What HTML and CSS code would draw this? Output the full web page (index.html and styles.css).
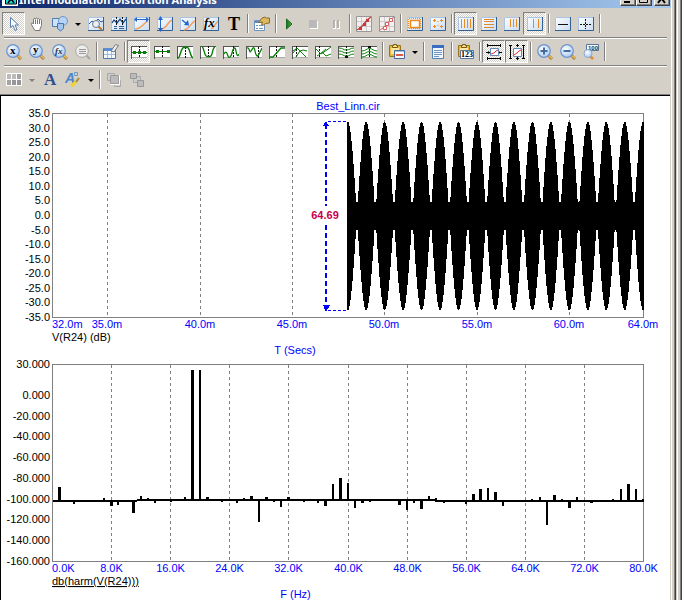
FILE: index.html
```html
<!DOCTYPE html>
<html lang="en">
<head>
<meta charset="utf-8">
<title>Intermodulation Distortion Analysis</title>
<link rel="stylesheet" href="styles.css">
</head>
<body>
<svg class="sprite" aria-hidden="true">
  <defs>
    <linearGradient id="tile" x1="0" y1="0" x2="1" y2="1"><stop offset="0" stop-color="#fff"/><stop offset="1" stop-color="#c9dcf2"/></linearGradient>
    <radialGradient id="lens" cx=".4" cy=".35" r=".7"><stop offset="0" stop-color="#fff"/><stop offset="1" stop-color="#a4c8f4"/></radialGradient>
    <linearGradient id="leaf" x1="0" y1="0" x2="1" y2="0"><stop offset="0" stop-color="#1c6e1c"/><stop offset="1" stop-color="#4eb04e"/></linearGradient>

    <symbol id="frame" viewBox="0 0 16 16"><path fill="url(#tile)" d="M0 1h15v14H0z"/><path fill="none" stroke="#a9c4e4" d="M.5 14V1.5H15"/><path fill="none" stroke="#34608f" d="M0 14.5h15.5V1"/></symbol>
    <symbol id="magnifier" viewBox="0 0 16 16"><path stroke="#a87830" stroke-width="3" d="M11 11l4 4"/><path stroke="#ecc050" stroke-width="1.500" d="M11 11l4 3.500"/><circle cx="7" cy="7" r="6.300" fill="url(#lens)" stroke="#6f92cc" stroke-width="1.200"/></symbol>
    <symbol id="axes" viewBox="0 0 16 16"><path fill="#fff" d="M0 2h16v12H0z"/><path stroke="#555" fill="none" d="M.5 2v13M0 2.500h16"/><path stroke="#aaa" d="M1 13.500h15"/></symbol>
    <symbol id="clipboard" viewBox="0 0 16 16"><path fill="#e8b83c" stroke="#9a7420" d="M.5 1.500h11v11H.5z"/><path fill="#fbe7a0" d="M2 4h8v6H2z"/><path fill="#f8e07c" stroke="#71591c" d="M3.500 3.500v-2h1v-1h3v1h1v2z"/></symbol>

    <symbol id="i-select" viewBox="0 0 16 16"><path fill="#f4f9ff" stroke="#5a7fae" d="M4.500 1.500v10l2.500-2 2 5 2-1-2-4.500h3.500z"/></symbol>
    <symbol id="i-hand" viewBox="0 0 16 16"><path fill="#fff" stroke="#777" d="M5 13L2.500 8.500c-1-1.500 1-2 2-.5V3.500c0-1.500 1.800-1.500 1.800 0 0-2 2.200-2 2.200 0 0-1.500 2-1.500 2 .500 0-1 2-1 2 .5v5L11 13v1.500H6z"/><path stroke="#777" d="M6.500 4v4M8.500 4v4M10.500 4v4"/></symbol>
    <symbol id="i-shapes" viewBox="0 0 16 16"><path fill="#cfe2f8" stroke="#4e7db4" d="M.5 2.500h9v8h-9z"/><circle cx="11" cy="5" r="4.500" fill="#b7d4f4" stroke="#6a94c6"/><path fill="#a3c6ee" stroke="#4878b0" d="M5.500 7.500h6v5l-3 2.500-3-2.500z"/></symbol>
    <symbol id="i-zoomwave" viewBox="0 0 16 16"><use href="#frame"/><path stroke="#2659b0" fill="none" d="M1 8l3-3 3 2 3-4 3 3 2-1"/><path stroke="#b8762a" stroke-width="2" d="M10 10l4 4"/><circle cx="8" cy="8" r="3.500" fill="#e6effa" stroke="#777"/></symbol>
    <symbol id="i-data" viewBox="0 0 16 16"><use href="#frame"/><path stroke="#134b8a" fill="none" stroke-width="1.300" d="M1 7l2-3 3 3 3-4 3 4 3-4"/><path stroke="#111" stroke-dasharray="2 1" d="M5.500 1v8M11.500 1v8"/><path stroke="#345f93" d="M3 10.500h3M8 10.500h5M3 12.500h3M8 12.500h5"/></symbol>
    <symbol id="i-scalex" viewBox="0 0 16 16"><use href="#frame"/><path stroke="#f0a060" stroke-width="1.500" fill="none" d="M1 13c7 0 8-6 13-8"/><path stroke="#2466cc" d="M1 3.500h13"/><path fill="#2466cc" d="M0 3.500L3 1v5zM15 3.500L12 1v5z"/></symbol>
    <symbol id="i-scaley" viewBox="0 0 16 16"><use href="#frame"/><path stroke="#f0a060" stroke-width="1.500" fill="none" d="M4 13c6 0 6-7 11-9"/><path stroke="#2466cc" d="M3.500 2v12"/><path fill="#2466cc" d="M3.500 0L1 4h5zM3.500 16L1 12h5z"/></symbol>
    <symbol id="i-scalexy" viewBox="0 0 16 16"><use href="#frame"/><path stroke="#f0a060" stroke-width="1.500" fill="none" d="M4 14c6-1 6-7 11-9"/><path stroke="#2466cc" stroke-width="1.500" d="M2 4l5 4"/><path fill="#2466cc" d="M9 9.500L4 9l4-5z"/></symbol>
    <symbol id="i-fx" viewBox="0 0 16 16"><use href="#frame"/><path stroke="#f0a060" stroke-width="1.500" fill="none" d="M8 13c4-1 4-6 7-8"/><text class="glyph-fx" x="1" y="11">fx</text></symbol>
    <symbol id="i-text" viewBox="0 0 16 16"><text class="glyph-t" x="2" y="14">T</text></symbol>
    <symbol id="i-props" viewBox="0 0 16 16"><path fill="#fff" stroke="#6f93bf" d="M.5 4.500h10v10H.5z"/><path fill="#5b8cc8" d="M1 5h9v2H1z"/><path stroke="#6f93bf" d="M2 9.500h2M5 9.500h4M2 12.500h2M5 12.500h4"/><path fill="#dcb95c" stroke="#8a6c2c" d="M4.500 6.500l3-4 3-1.500 2 1h3v5l-4 .5-2 1.500-2-.5 1-2.500z"/></symbol>
    <symbol id="i-play" viewBox="0 0 16 16"><path fill="url(#leaf)" stroke="#1a6a1c" d="M4.500 3v10l5.500-5z"/></symbol>
    <symbol id="i-stop" viewBox="0 0 16 16"><path fill="#fff" d="M5 5h8v8H5z"/><path fill="#b9b9b9" d="M4 4h8v8H4z"/></symbol>
    <symbol id="i-pause" viewBox="0 0 16 16"><path fill="#fff" d="M5 5h3v8H5zM9 5h3v8H9z"/><path fill="#b2b2b2" d="M5 4h2v8H5zM9 4h2v8H9z"/></symbol>
    <symbol id="i-datapts" viewBox="0 0 16 16"><path fill="#f5f0ee" stroke="#999" d="M.5 .5h15v15H.5z"/><path stroke="#ccc" d="M5.500 1v14M10.500 1v14M1 5.500h14M1 10.500h14"/><path stroke="#c83838" stroke-width="1.300" fill="none" d="M1 14l3-2 4-4 3-4 4-3"/><path fill="#c83838" d="M3 11h3v3H3zM7 7h3v3H7zM10 3h3v3h-3z"/></symbol>
    <symbol id="i-tokens" viewBox="0 0 16 16"><path fill="#f5f0ee" stroke="#999" d="M.5 .5h15v15H.5z"/><path stroke="#ccc" d="M5.500 1v14M10.500 1v14M1 5.500h14M1 10.500h14"/><path stroke="#d86060" fill="none" d="M1 14l3-2 4-4 3-4 4-3"/><path fill="#fff" stroke="#d86060" d="M4.500 10.500h3v3h-3zM6.500 6.500h3v3h-3zM10.500 2.500h3v3h-3z"/></symbol>
    <symbol id="i-ruler" viewBox="0 0 16 16"><use href="#frame"/><path fill="#fff" stroke="#ef8a1c" stroke-width="1.500" d="M3.500 4.500h9v7h-9z"/><path fill="none" stroke="#ef8a1c" stroke-dasharray="1 1" d="M2 2.500h12M2 12.500h12M1.500 3v10M13.500 3v10"/></symbol>
    <symbol id="i-plus" viewBox="0 0 16 16"><use href="#frame"/><path stroke="#ef8a1c" d="M4.500 3v3M3 4.500h3M11.500 3v3M10 4.500h3M4.500 9v3M3 10.500h3M11.500 9v3M10 10.500h3M8 5v1M8 9v1"/></symbol>
    <symbol id="i-vmajor" viewBox="0 0 16 16"><use href="#frame"/><path stroke="#e58b25" d="M3.500 3v9M6.500 3v9M9.500 3v9M12.500 3v9"/></symbol>
    <symbol id="i-hmajor" viewBox="0 0 16 16"><use href="#frame"/><path stroke="#e58b25" d="M3 3.500h10M3 5.500h10M3 8.500h10M3 11.500h10"/></symbol>
    <symbol id="i-vright" viewBox="0 0 16 16"><use href="#frame"/><path stroke="#e58b25" d="M6.500 3v8M9.500 3v8M12.500 3v8"/></symbol>
    <symbol id="i-vtwo" viewBox="0 0 16 16"><use href="#frame"/><path stroke="#e58b25" d="M6.500 3v9M11.500 3v9"/></symbol>
    <symbol id="i-baseline" viewBox="0 0 16 16"><use href="#frame"/><path stroke="#111" d="M3 8.500h10"/></symbol>
    <symbol id="i-cross" viewBox="0 0 16 16"><use href="#frame"/><path stroke="#111" stroke-dasharray="2 1" d="M2 8.500h12M7.500 3v10"/></symbol>

    <symbol id="i-zx" viewBox="0 0 16 16"><use href="#magnifier"/><text class="glyph-axis" x="4" y="10">x</text></symbol>
    <symbol id="i-zy" viewBox="0 0 16 16"><use href="#magnifier"/><text class="glyph-axis" x="4" y="9">y</text></symbol>
    <symbol id="i-zfx" viewBox="0 0 16 16"><use href="#magnifier"/><text class="glyph-lens" x="3" y="10">fx</text></symbol>
    <symbol id="i-zlist" viewBox="0 0 16 16"><path stroke="#a5a5a5" stroke-width="2" d="M11 11l4 4"/><circle cx="7" cy="7" r="6.300" fill="#eee" stroke="#a5a5a5"/><path stroke="#999" d="M4 5.500h7M4 7.500h7M4 9.500h7"/></symbol>
    <symbol id="i-table" viewBox="0 0 16 16"><path fill="#f5faff" stroke="#4b79b0" d="M.5 4.500h12v10H.5z"/><path fill="#5b8fd0" d="M1 4h11v3H1z"/><path stroke="#9fbbe0" d="M4.500 7v7M8.500 7v7M1 10.500h11"/><path fill="#eee" stroke="#6f7887" d="M8 7l4.500-6.500 3 1L11 8z"/></symbol>
    <symbol id="i-w1" viewBox="0 0 16 16"><use href="#axes"/><path stroke="#111" stroke-dasharray="2 1" d="M8.500 2v12"/><path stroke="#087c08" d="M0 8.500h16"/><path fill="#087c08" d="M2 7h3v3H2zM7 7h3v3H7zM12 7h3v3h-3z"/></symbol>
    <symbol id="i-w2" viewBox="0 0 16 16"><use href="#axes"/><path stroke="#111" stroke-dasharray="2 1" d="M8.500 2v12"/><path stroke="#087c08" d="M0 7.500h16"/><path fill="#087c08" d="M2 6h3v3H2zM13 6h3v3h-3z"/></symbol>
    <symbol id="i-w3" viewBox="0 0 16 16"><use href="#axes"/><path stroke="#111" stroke-dasharray="2 1" d="M8.500 3v11"/><path stroke="#087c08" fill="none" stroke-width="1.400" d="M1 14c2 0 3-10 5.500-10.500h4C13 4 13 13 16 14"/></symbol>
    <symbol id="i-w4" viewBox="0 0 16 16"><use href="#axes"/><path stroke="#111" stroke-dasharray="2 1" d="M8.500 2v11"/><path stroke="#087c08" fill="none" stroke-width="1.400" d="M2 3c2 0 2 9 5 9.500h3c3 0 2-9 5-9.500"/></symbol>
    <symbol id="i-w5" viewBox="0 0 16 16"><use href="#axes"/><path stroke="#111" stroke-dasharray="2 1" d="M10.500 2v12"/><path stroke="#087c08" fill="none" stroke-width="1.300" d="M1 10c2-4 3-1 4 2s3 1 4-3 3-8 4-2 2 5 3 3"/></symbol>
    <symbol id="i-w6" viewBox="0 0 16 16"><use href="#axes"/><path stroke="#111" stroke-dasharray="2 1" d="M12.500 3v11"/><path stroke="#087c08" fill="none" stroke-width="1.300" d="M1 4c3-1 2 6 4 3s3-6 4 0 3 6 4 3l3-6"/></symbol>
    <symbol id="i-w7" viewBox="0 0 16 16"><use href="#axes"/><path stroke="#111" stroke-dasharray="2 1" d="M7.500 2v12"/><path stroke="#087c08" fill="none" stroke-width="1.300" d="M1 13h3l8-9h4"/></symbol>
    <symbol id="i-w8" viewBox="0 0 16 16"><use href="#axes"/><path stroke="#111" stroke-dasharray="2 1" d="M4.500 2v12"/><path stroke="#087c08" fill="none" d="M1 9l4-5 9 9M4 13l4-6 3-1 4 1M1 7l4-3"/></symbol>
    <symbol id="i-w9" viewBox="0 0 16 16"><use href="#axes"/><path stroke="#111" stroke-dasharray="2 1" d="M4.500 2v12"/><path stroke="#087c08" fill="none" d="M1 5l5 5 3-2 7-5M2 12l3-2 6-5M7 8l4 4 5-2"/></symbol>
    <symbol id="i-w10" viewBox="0 0 16 16"><use href="#axes"/><path stroke="#111" stroke-dasharray="2 1" d="M8.500 2v12"/><path stroke="#087c08" fill="none" d="M1 4c4 0 4 2 7.500 2S12 4 16 4M1 7c4 0 4 2 7.500 2S12 7 16 7M1 10c4 0 4 2 7.500 2S12 10 16 10"/><path fill="#111" d="M7 12h3v2H7z"/></symbol>
    <symbol id="i-w11" viewBox="0 0 16 16"><use href="#axes"/><path stroke="#111" stroke-dasharray="2 1" d="M8.500 2v12"/><path stroke="#087c08" fill="none" d="M1 7c4 0 4-2.500 7.500-2.500S12 7 16 7M1 10c4 0 4-2.500 7.500-2.500S12 10 16 10M1 13c4 0 4-2.500 7.500-2.500S12 13 16 13"/><path fill="#111" d="M7 2h3v2H7z"/></symbol>
    <symbol id="i-paste" viewBox="0 0 16 16"><use href="#clipboard"/><path fill="#f4f8ff" stroke="#44699c" d="M5.500 6.500h10v8h-10z"/><path fill="#a8c3e8" d="M6 7h9v1H6z"/><path stroke="#d93420" fill="none" d="M7 10l1 2 1-2 1 2 1-2 1 2 1-2 1 2"/></symbol>
    <symbol id="i-page" viewBox="0 0 16 16"><path fill="#f1f6fd" stroke="#5580b6" d="M2.500 1.500h11v13h-11z"/><path fill="#3a6cc4" d="M2 1h12v3H2z"/><path stroke="#7494c2" d="M4 6.500h8M4 8.500h8M4 10.500h8M4 12.500h5"/></symbol>
    <symbol id="i-paste123" viewBox="0 0 16 16"><use href="#clipboard"/><path fill="#fff" stroke="#5876a0" d="M2.500 6.500h13v8h-13z"/><text class="glyph-num" x="3" y="13">123</text></symbol>
    <symbol id="i-samex" viewBox="0 0 16 16"><path fill="#fff" stroke="#6686b8" d="M4.500 4.500h8v7h-8z"/><path stroke="#e03030" fill="none" d="M5 10l3-1 2-2 2-1"/><path stroke="#000" d="M1 1.500h14M1 14.500h14M0 8.500h4M13 8.500h3"/><path fill="#000" d="M1 0h1v3H1zM14 0h1v3h-1zM1 13h1v3H1zM14 13h1v3h-1zM2 7l2 1.500-2 1.500zM14 7l-1 1.500 1 1.500z"/></symbol>
    <symbol id="i-samey" viewBox="0 0 16 16"><path fill="#fff" stroke="#6686b8" d="M4.500 4.500h8v8h-8z"/><path stroke="#e03030" fill="none" d="M5 11l3-2 2-2 2-1"/><path stroke="#000" d="M1.500 1v14M14.500 1v14M8.500 0v3M8.500 13v3"/><path fill="#000" d="M0 1h3v1H0zM0 14h3v1H0zM13 1h3v1h-3zM13 14h3v1h-3zM7 1h3v1H7zM7 14h3v1H7z"/></symbol>
    <symbol id="i-zin" viewBox="0 0 16 16"><use href="#magnifier"/><path stroke="#426c9e" stroke-width="2" d="M3.500 7h7M7 3.500v7"/></symbol>
    <symbol id="i-zout" viewBox="0 0 16 16"><use href="#magnifier"/><path stroke="#426c9e" stroke-width="2" d="M3.500 7h7"/></symbol>
    <symbol id="i-z100" viewBox="0 0 16 16"><path fill="#f6f9ff" stroke="#56749c" d="M3.500 .5h12v6h-12z"/><text class="glyph-100" x="5" y="6">100</text><path stroke="#e08a2c" stroke-width="2.500" d="M7 12l3 3"/><circle cx="5" cy="9.500" r="4" fill="url(#lens)" stroke="#8ea7c8"/></symbol>

    <symbol id="i-cells" viewBox="0 0 16 16"><path fill="#fff" d="M0 1h16v13H0z"/><path fill="#bbb" d="M1 2h4v5H1zM6 2h4v5H6z"/><path fill="#a4a4a4" d="M11 2h4v5h-4zM1 8h4v5H1z"/><path fill="#969696" d="M6 8h4v5H6zM11 8h4v5h-4z"/></symbol>
    <symbol id="i-font" viewBox="0 0 16 16"><text class="glyph-a" x="2" y="13">A</text></symbol>
    <symbol id="i-style" viewBox="0 0 16 16"><text class="glyph-a2" x="0" y="11">A</text><path fill="none" stroke="#6c99c8" d="M9.500 .5h3v3h-3z"/><path stroke="#f2d428" stroke-width="3" d="M6 14l5-4"/><path stroke="#a88b34" stroke-width="2" d="M11 10l3-4"/></symbol>
    <symbol id="i-front" viewBox="0 0 16 16"><path fill="#ccc" stroke="#aaa" d="M1.500 1.500h7v7h-7zM8.500 8.500h6v6h-6z"/><path fill="#c2c2c2" stroke="#fff" d="M4.500 3.500h9v9h-9z"/><path fill="#bbb" stroke="#999" d="M4.500 3.500h8v8h-8z"/></symbol>
    <symbol id="i-back" viewBox="0 0 16 16"><path fill="#ccc" stroke="#aaa" d="M4.500 4.500h7v6h-7z"/><path fill="#bbb" stroke="#999" d="M1.500 1.500h6v5h-6zM8.500 8.500h6v6h-6z"/></symbol>
  </defs>
</svg>

<div class="desktop">
  <main class="window">
    <header class="titlebar">
      <svg class="app-icon" viewBox="0 0 16 8" aria-hidden="true"><path fill="#fff" d="M0 0h16v8H0z"/><path fill="#22d8d8" stroke="#000" d="M3.500 -1h11v7h-11z"/><path stroke="#000" fill="none" stroke-width="1.500" d="M6 5l2-3h2l2 3"/></svg>
      <h1 class="title">Intermodulation Distortion Analysis</h1>
      <div class="window-buttons">
        <button class="winbtn" aria-label="Minimize"><svg viewBox="0 0 14 5"><path fill="#000" d="M3 1h6v2H3z"/></svg></button>
        <button class="winbtn" aria-label="Maximize"><svg viewBox="0 0 14 5"><path fill="none" stroke="#000" d="M2.500 -2v4.500h8V-2"/></svg></button>
        <button class="winbtn winbtn-close" aria-label="Close"><svg viewBox="0 0 14 5"><path stroke="#000" stroke-width="2" d="M3 3l3-4M10 3L7-1"/></svg></button>
      </div>
    </header>

    <nav class="toolbar" aria-label="Analysis tools">
      <button class="tool pressed" aria-label="Select"><svg><use href="#i-select"/></svg></button>
      <button class="tool" aria-label="Pan"><svg><use href="#i-hand"/></svg></button>
      <button class="tool" aria-label="Shapes"><svg><use href="#i-shapes"/></svg></button>
      <button class="caret" aria-label="More shapes"></button>
      <button class="tool" aria-label="Zoom plot"><svg><use href="#i-zoomwave"/></svg></button>
      <button class="tool" aria-label="Cursor data"><svg><use href="#i-data"/></svg></button>
      <button class="tool" aria-label="Horizontal tag"><svg><use href="#i-scalex"/></svg></button>
      <button class="tool" aria-label="Vertical tag"><svg><use href="#i-scaley"/></svg></button>
      <button class="tool" aria-label="Point tag"><svg><use href="#i-scalexy"/></svg></button>
      <button class="tool" aria-label="Performance tag"><svg><use href="#i-fx"/></svg></button>
      <button class="tool" aria-label="Text"><svg><use href="#i-text"/></svg></button>
      <span class="divider"></span>
      <button class="tool" aria-label="Properties"><svg><use href="#i-props"/></svg></button>
      <span class="divider"></span>
      <button class="tool" aria-label="Run"><svg><use href="#i-play"/></svg></button>
      <button class="tool" aria-label="Stop" disabled><svg><use href="#i-stop"/></svg></button>
      <button class="tool" aria-label="Pause" disabled><svg><use href="#i-pause"/></svg></button>
      <span class="divider"></span>
      <button class="tool" aria-label="Data points"><svg><use href="#i-datapts"/></svg></button>
      <button class="tool" aria-label="Tokens"><svg><use href="#i-tokens"/></svg></button>
      <span class="divider"></span>
      <button class="tool" aria-label="Ruler"><svg><use href="#i-ruler"/></svg></button>
      <button class="tool" aria-label="Plus mark"><svg><use href="#i-plus"/></svg></button>
      <span class="divider"></span>
      <button class="tool pressed" aria-label="Horizontal axis grids"><svg><use href="#i-vmajor"/></svg></button>
      <button class="tool" aria-label="Vertical axis grids"><svg><use href="#i-hmajor"/></svg></button>
      <button class="tool" aria-label="Minor log grids"><svg><use href="#i-vright"/></svg></button>
      <button class="tool pressed" aria-label="Minor grids"><svg><use href="#i-vtwo"/></svg></button>
      <span class="divider"></span>
      <button class="tool" aria-label="Baseline"><svg><use href="#i-baseline"/></svg></button>
      <button class="tool" aria-label="Crosshair"><svg><use href="#i-cross"/></svg></button>
      <span class="divider"></span>
    </nav>

    <nav class="toolbar" aria-label="Cursor tools">
      <button class="tool" aria-label="Go to X"><svg><use href="#i-zx"/></svg></button>
      <button class="tool" aria-label="Go to Y"><svg><use href="#i-zy"/></svg></button>
      <button class="tool" aria-label="Go to performance"><svg><use href="#i-zfx"/></svg></button>
      <button class="tool" aria-label="Go to branch" disabled><svg><use href="#i-zlist"/></svg></button>
      <span class="divider"></span>
      <button class="tool" aria-label="Clear table"><svg><use href="#i-table"/></svg></button>
      <span class="divider"></span>
      <button class="tool pressed" aria-label="Next data point"><svg><use href="#i-w1"/></svg></button>
      <button class="tool" aria-label="Next interpolated point"><svg><use href="#i-w2"/></svg></button>
      <button class="tool" aria-label="Peak"><svg><use href="#i-w3"/></svg></button>
      <button class="tool" aria-label="Valley"><svg><use href="#i-w4"/></svg></button>
      <button class="tool" aria-label="High"><svg><use href="#i-w5"/></svg></button>
      <button class="tool" aria-label="Low"><svg><use href="#i-w6"/></svg></button>
      <button class="tool" aria-label="Inflection"><svg><use href="#i-w7"/></svg></button>
      <button class="tool" aria-label="Global high"><svg><use href="#i-w8"/></svg></button>
      <button class="tool" aria-label="Global low"><svg><use href="#i-w9"/></svg></button>
      <button class="tool" aria-label="Bottom"><svg><use href="#i-w10"/></svg></button>
      <button class="tool" aria-label="Top"><svg><use href="#i-w11"/></svg></button>
      <span class="divider"></span>
      <button class="tool" aria-label="Copy plot"><svg><use href="#i-paste"/></svg></button>
      <button class="caret" aria-label="Copy options"></button>
      <span class="divider"></span>
      <button class="tool" aria-label="Numeric output"><svg><use href="#i-page"/></svg></button>
      <span class="divider"></span>
      <button class="tool" aria-label="Copy numbers"><svg><use href="#i-paste123"/></svg></button>
      <span class="divider"></span>
      <button class="tool pressed" aria-label="Same X scales"><svg><use href="#i-samex"/></svg></button>
      <button class="tool pressed" aria-label="Same Y scales"><svg><use href="#i-samey"/></svg></button>
      <span class="divider"></span>
      <button class="tool" aria-label="Zoom in"><svg><use href="#i-zin"/></svg></button>
      <button class="tool" aria-label="Zoom out"><svg><use href="#i-zout"/></svg></button>
      <button class="tool" aria-label="Zoom 100"><svg><use href="#i-z100"/></svg></button>
      <span class="divider"></span>
    </nav>

    <nav class="toolbar toolbar-last" aria-label="Format tools">
      <button class="tool" aria-label="Color" disabled><svg><use href="#i-cells"/></svg></button>
      <button class="caret" aria-label="More colors" disabled></button>
      <button class="tool" aria-label="Font"><svg><use href="#i-font"/></svg></button>
      <button class="tool" aria-label="Style"><svg><use href="#i-style"/></svg></button>
      <button class="caret" aria-label="More styles"></button>
      <span class="divider"></span>
      <button class="tool" aria-label="Bring to front" disabled><svg><use href="#i-front"/></svg></button>
      <button class="tool" aria-label="Send to back" disabled><svg><use href="#i-back"/></svg></button>
    </nav>

    <section class="plots">
      <svg id="time-plot" class="plot" viewBox="1 96 669 262" role="img" aria-label="V(R24) against time"></svg>
      <svg id="spectrum-plot" class="plot" viewBox="1 358 669 242" role="img" aria-label="Harmonics of V(R24)"></svg>
    </section>
  </main>
  <div class="edge"></div>
</div>
<script src="plots.js"></script>
</body>
</html>
```
FILE: styles.css
```css
* { box-sizing: border-box; }

body {
  margin: 0;
  background: #d4d0c8;
  font-family: "Liberation Sans", Arial, sans-serif;
  font-size: 11px;
  overflow: hidden;
}

.sprite { position: absolute; width: 0; height: 0; }

.desktop { display: flex; min-height: 100vh; }
.window { flex: 1; min-width: 0; display: flex; flex-direction: column; }

.titlebar {
  display: flex;
  align-items: flex-end;
  height: 8px;
  padding: 0 0 2px 2px;
  gap: 1px;
  overflow: hidden;
  background: linear-gradient(90deg, #0a246a, #a6caf0);
}
.app-icon { flex: none; width: 16px; height: 8px; }
.title {
  flex: 1;
  margin: 0;
  color: #fff;
  font: bold 11px/12px "Noto Sans", "Open Sans", sans-serif;
  white-space: nowrap;
}
.window-buttons { display: flex; padding-right: 1px; }
.winbtn {
  width: 16px;
  height: 14px;
  padding: 0;
  display: flex;
  align-items: flex-end;
  background: #d4d0c8;
  border: 1px solid;
  border-color: #fff #404040 #404040 #fff;
  box-shadow: inset -1px -1px #808080;
}
.winbtn svg { width: 14px; height: 5px; }
.winbtn-close { margin-left: 2px; }

.toolbar {
  display: flex;
  align-items: center;
  margin-right: 4px;
  margin-left: 4px;
  padding: 1px 0 2px;
  border-bottom: 1px solid #808080;
  box-shadow: 0 1px #fff;
  margin-bottom: 1px;
}
.toolbar > :first-child { margin-left: -2px; }
.titlebar + .toolbar { padding-top: 4px; }
.toolbar-last { margin-bottom: 0; padding-bottom: 4px; border: 0; box-shadow: none; }

.tool {
  flex: none;
  display: flex;
  align-items: center;
  justify-content: center;
  width: 23px;
  height: 23px;
  padding: 0;
  border: 1px solid transparent;
  background: none;
}
.tool svg { width: 16px; height: 16px; overflow: visible; }
.pressed {
  border-color: #808080 #fff #fff #808080;
  background: repeating-conic-gradient(#fff 0 25%, #d4d0c8 0 50%) 0 0 / 2px 2px;
}
.divider {
  flex: none;
  width: 2px;
  height: 19px;
  margin: 0 1px 0 2px;
  background: linear-gradient(90deg, #808080 50%, #fff 50%);
}
.caret {
  flex: none;
  width: 13px;
  height: 23px;
  padding: 2px 0 0;
  display: flex;
  align-items: center;
  justify-content: center;
  border: 0;
  background: none;
}
.caret::before {
  content: "";
  border: 3px solid transparent;
  border-top-color: #000;
  border-bottom: 0;
}
.caret:disabled::before { border-top-color: #808080; }

.glyph-fx { font: italic bold 13px "Liberation Serif", serif; }
.glyph-t { font: bold 18px "Liberation Serif", serif; }
.glyph-axis { font: bold 11px "Liberation Serif", serif; }
.glyph-lens { font: italic bold 9px "Liberation Serif", serif; fill: #234; }
.glyph-num { font: bold 8px "Liberation Serif", serif; }
.glyph-100 { font: bold 6px "Liberation Sans", sans-serif; fill: #234; }
.glyph-a { font: bold 17px "Liberation Serif", serif; fill: #2f4f8f; }
.glyph-a2 { font: italic bold 14px "Liberation Sans", sans-serif; fill: #4a86c8; }

.plots {
  flex: 1;
  margin-right: 1px;
  background: #fff;
  border: solid #000;
  border-width: 1px 0 0 1px;
  box-shadow: 0 -1px #808080;
}
.plot { display: block; width: 100%; height: auto; }
.plot text { font-size: 11px; fill: #000; }
.plot .blue { fill: #00f; }
.plot .measure { fill: #c8004b; font-weight: bold; }
.plot .end { text-anchor: end; }
.plot .middle { text-anchor: middle; }
.plot .underlined { text-decoration: underline; }
.plot path, .plot rect { shape-rendering: crispEdges; }
.plot .box { fill: none; stroke: #808080; }
.plot .grid { fill: none; stroke: #808080; stroke-dasharray: 3 3; }
.plot .trace { fill: #000; }
.plot .leader { fill: none; stroke: #00f; stroke-dasharray: 3 2; }
.plot .dimension { fill: none; stroke: #00f; stroke-width: 2; stroke-dasharray: 5 3; }
.plot .arrow { fill: #00f; }

.edge {
  flex: none;
  width: 11px;
  background: linear-gradient(90deg,
    #fff 1px, #d4d0c8 1px 3px, #808080 3px 4px, #404040 4px 5px,
    #d4d0c8 5px 6px, #fff 6px 7px, #d4d0c8 7px 9px, #808080 9px 10px, #404040 10px);
}
```
FILE: plots.js
```javascript
const NS = "http://www.w3.org/2000/svg";
const LEFT = 52.5;
const RIGHT = 643.5;

function add(parent, tag, attrs, content) {
  const node = document.createElementNS(NS, tag);
  for (const key in attrs) node.setAttribute(key, attrs[key]);
  if (content !== undefined) node.textContent = content;
  parent.appendChild(node);
}

function label(svg, x, y, content, cls) {
  add(svg, "text", { x, y, class: cls || "" }, content);
}

function frame(svg, top, bottom, gridX) {
  add(svg, "path", { class: "grid", d: gridX.map(x => `M${x} ${top}V${bottom}`).join("") });
  add(svg, "path", { class: "box", d: `M${LEFT} ${top}H${RIGHT}V${bottom}H${LEFT}z` });
}

/* Time-domain plot: a beat envelope sampled one column at a time. */
const time = document.getElementById("time-plot");
frame(time, 113.5, 317.5, [107.5, 200.5, 292.5, 384.5, 477.5, 569.5]);
label(time, 348, 110, "Best_Linn.cir", "blue middle");
for (let i = 0; i <= 14; i++) {
  label(time, 50, Math.round(117 + i * 204 / 14), (35 - i * 5).toFixed(1), "end");
}
label(time, 52, 328, "32.0m", "blue");
[[107, 35], [200, 40], [292, 45], [384, 50], [477, 55], [569, 60], [643, 64]].forEach(([x, v]) =>
  label(time, x, 328, v.toFixed(1) + "m", "blue middle"));
label(time, 52, 341, "V(R24) (dB)");
label(time, 295, 354, "T (Secs)", "blue middle");

let envelope = "";
for (let x = 347; x < 644; x++) {
  const beat = Math.abs(Math.cos(Math.PI * (x + 0.5 - 347.7) / 18.47));
  const half = Math.round(Math.max(94.5 * beat, 14));
  envelope += `M${x} ${215.5 - half}h1v${2 * half}h-1z`;
}
add(time, "path", { class: "trace", d: envelope });
add(time, "path", { class: "leader", d: "M328 121.500H348M328 310.500H348" });
add(time, "path", { class: "dimension", d: "M326 124V206M326 225V306" });
add(time, "path", { class: "arrow", d: "M326 121l3 5h-6zM326 312l4-7h-7z" });
label(time, 325, 219, "64.69", "measure middle");

/* Spectrum: [column, end of the spike, width] around the noise floor. */
const spectrum = document.getElementById("spectrum-plot");
const ticks = [111.5, 170.5, 229.5, 288.5, 348.5, 407.5, 466.5, 525.5, 584.5];
frame(spectrum, 364.5, 561.5, ticks);
label(spectrum, 50, 368, "30.000", "end");
for (let v = 0; v >= -160; v -= 20) {
  label(spectrum, 50, Math.round(399 - v * 1.037), v.toFixed(3), "end");
}
label(spectrum, 52, 572, "0.0K", "blue");
ticks.concat(643.5).forEach((x, i) =>
  label(spectrum, x, 572, ((i + 1) * 8).toFixed(1) + "K", "blue middle"));
label(spectrum, 52, 585, "db(harm(V(R24)))", "underlined");
label(spectrum, 295.5, 598, "F (Hz)", "blue middle");

const FLOOR = 500;
const spikes = [
  [58, 487, 3], [67, 502, 2], [73, 504, 2], [103, 498, 2], [110, 506, 3], [117, 505, 2],
  [125, 502, 2], [132, 513, 3], [140, 496, 2], [147, 498, 2], [154, 503, 2], [170, 502, 2],
  [184, 497, 2], [191, 370, 3], [199, 370, 2], [206, 497, 3], [221, 502, 2], [236, 503, 2],
  [243, 498, 2], [250, 496, 3], [258, 522, 2], [265, 497, 3], [273, 502, 2], [280, 507, 2],
  [287, 497, 3], [303, 502, 2], [317, 503, 2], [324, 506, 3], [332, 484, 2], [339, 478, 3],
  [347, 483, 2], [354, 508, 2], [361, 503, 3], [369, 502, 2], [398, 505, 3], [406, 510, 2],
  [413, 503, 2], [420, 509, 3], [428, 496, 2], [435, 498, 2], [443, 503, 2], [465, 504, 2],
  [472, 494, 3], [479, 489, 3], [487, 488, 2], [494, 492, 3], [502, 506, 2], [531, 499, 2],
  [539, 497, 2], [546, 525, 2], [553, 495, 3], [561, 499, 2], [568, 508, 3], [576, 497, 2],
  [590, 503, 3], [612, 499, 2], [620, 489, 2], [627, 484, 3], [635, 489, 2], [642, 499, 2]
];
let trace = "M53 500h84v2h-84zM137 499h298v2h-298zM435 500h209v2h-209z";
spikes.forEach(([x, end, width]) => {
  trace += `M${x} ${Math.min(end, FLOOR)}h${width}V${Math.max(end, FLOOR)}h-${width}z`;
});
add(spectrum, "path", { class: "trace", d: trace });
```
